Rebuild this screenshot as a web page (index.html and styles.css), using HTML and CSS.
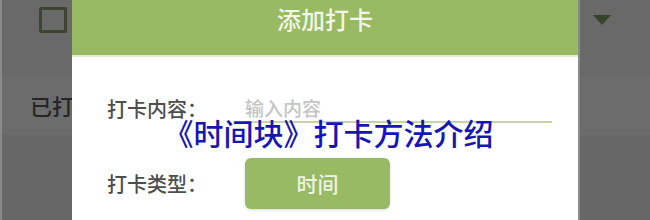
FILE: index.html
```html
<!DOCTYPE html>
<html lang="zh">

<head>
    <meta charset="UTF-8">
    <meta name="viewport" content="width=device-width, initial-scale=1.0">
    <title>时间块</title>
    <link rel="stylesheet" href="styles.css">
</head>

<body>
    <div class="page">
        <!-- 左边被遮住的列表 -->
        <div class="side side-left">
            <div class="side-top">
                <span class="check"></span>
            </div>
            <div class="side-row">已打卡</div>
        </div>
        <!-- 弹出的对话框 -->
        <div class="dialog">
            <div class="dialog-title">添加打卡</div>
            <div class="dialog-body">
                <div class="form-row">
                    <label class="form-label">打卡内容：</label>
                    <div class="form-input">输入内容</div>
                </div>
                <div class="form-row">
                    <label class="form-label">打卡类型：</label>
                    <a class="type-btn" href="javascript:;">时间</a>
                </div>
            </div>
        </div>
        <div class="side side-right">
            <div class="side-top">
                <span class="arrow"></span>
            </div>
            <div class="side-row"></div>
        </div>
        <div class="caption">《时间块》打卡方法介绍</div>
    </div>
</body>

</html>
```

FILE: styles.css
```css
* {
    margin: 0;
    padding: 0;
    box-sizing: border-box;
}

body {
    background-color: #666;
    font-family: "Noto Sans CJK SC", sans-serif;
    font-weight: 500;
}

a {
    text-decoration: none;
}

.page {
    position: relative;
    display: flex;
    width: 650px;
    height: 220px;
    overflow: hidden;
}

.side {
    overflow: hidden;
    white-space: nowrap;
    background-color: #676767;
}

.side-left {
    width: 72px;
    border-left: 2px solid #8a8a8a;
}

.side-right {
    flex: 1;
    border-left: 2px solid #8a8a8a;
}

.side-top {
    height: 75px;
    padding-top: 7px;
    background-color: #696969;
}

.side-row {
    height: 60px;
    line-height: 60px;
    padding-left: 28px;
    font-size: 22px;
    color: #262626;
    background-color: #6c6c6c;
}

.check {
    display: block;
    width: 28px;
    height: 26px;
    margin-left: 37px;
    border: 3px solid #3c452f;
    border-radius: 2px;
}

.arrow {
    display: block;
    width: 0;
    height: 0;
    margin: 8px 0 0 13px;
    border-left: 9px solid transparent;
    border-right: 9px solid transparent;
    border-top: 10px solid #34432a;
}

.dialog {
    width: 506px;
    background-color: #fff;
}

.dialog-title {
    height: 57px;
    line-height: 37px;
    text-align: center;
    font-size: 24px;
    color: #f1f6e8;
    background-color: #97ba62;
    border-bottom: 2px solid #e2ebd4;
}

.dialog-body {
    display: flex;
    flex-direction: column;
    gap: 35px;
    padding: 37px 0 0 35px;
}

.form-row {
    display: flex;
    align-items: center;
}

.form-label {
    width: 138px;
    font-size: 20px;
    color: #4e4e4e;
}

.form-input {
    width: 307px;
    height: 28px;
    line-height: 26px;
    font-size: 19px;
    color: #c4c4c4;
    border-bottom: 2px solid #c9d2ad;
}

.type-btn {
    display: block;
    width: 145px;
    height: 51px;
    line-height: 51px;
    text-align: center;
    font-size: 21px;
    color: #eef4e2;
    background-color: #98ba64;
    border-radius: 6px;
    box-shadow: 0 1px 3px rgba(0, 0, 0, .15);
}

/* 盖在上面的标题 */
.caption {
    position: absolute;
    top: 112px;
    left: 0;
    right: 0;
    padding-left: 7px;
    text-align: center;
    font-size: 30px;
    line-height: 40px;
    color: #1616b6;
}
```
